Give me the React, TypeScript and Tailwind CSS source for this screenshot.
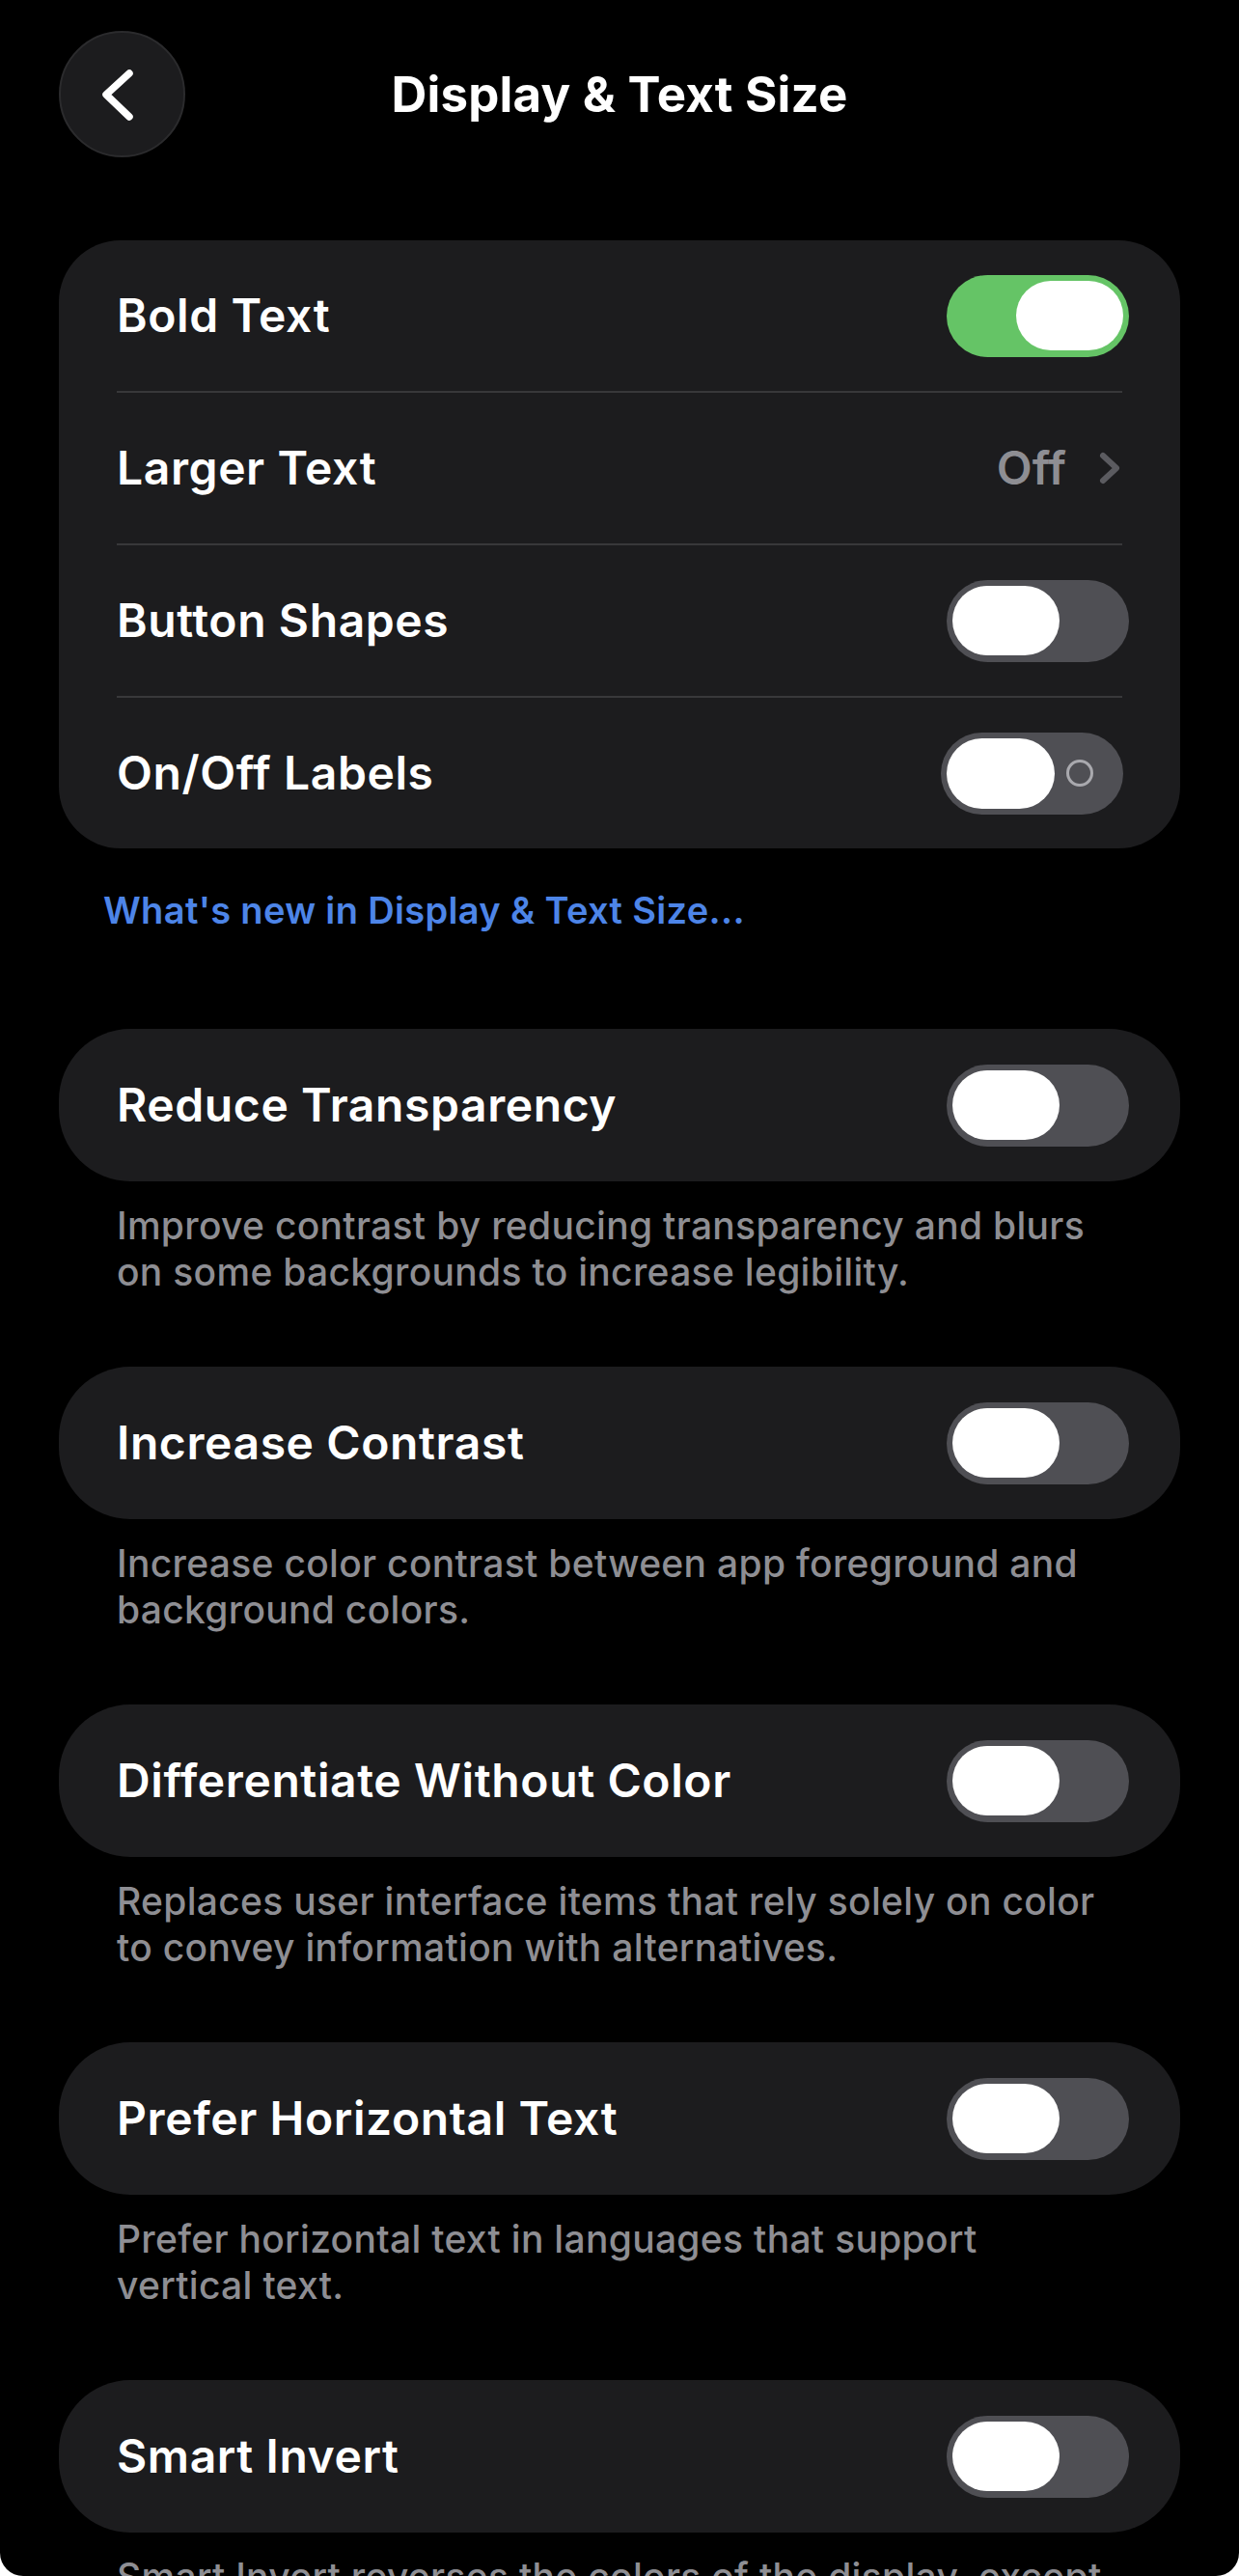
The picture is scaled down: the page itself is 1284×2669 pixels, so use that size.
import React from "react";

const FONT = "font-['Inter','Noto_Sans',sans-serif]";

function Toggle({ on = false, labels = false }: { on?: boolean; labels?: boolean }) {
  if (labels) {
    return (
      <div className="flex h-[85px] w-[189px] items-center rounded-full bg-[#4f4f54] px-[6px]">
        <div className="h-[73px] w-[112px] rounded-full bg-white" />
        <div className="ml-[12px] h-[28px] w-[28px] rounded-full border-[3px] border-[#a9a9ae]" />
      </div>
    );
  }
  return (
    <div
      className={
        on
          ? "flex h-[85px] w-[189px] items-center justify-end rounded-full bg-[#65c466] px-[6px]"
          : "flex h-[85px] w-[189px] items-center justify-start rounded-full bg-[#4f4f54] px-[6px]"
      }
    >
      <div className="h-[72px] w-[111px] rounded-full bg-white" />
    </div>
  );
}

function Separator() {
  return <div className="mx-[60px] h-[2px] bg-[#38383a]" />;
}

function Label({ children }: { children: React.ReactNode }) {
  return <span className="text-[48px] font-semibold leading-none text-white tracking-[0.6px]">{children}</span>;
}

function Section({ title, lines }: { title: string; lines: string[] }) {
  return (
    <div className="flex flex-col">
      <div className="flex h-[158px] items-center justify-between rounded-[74px] bg-[#1c1c1e] pl-[60px] pr-[53px]">
        <Label>{title}</Label>
        <Toggle />
      </div>
      <div className="mt-[22px] pl-[60px] text-[39px] font-medium leading-[48px] tracking-[0.3px] text-[#8e8e93]">
        {lines.map((l) => (
          <span key={l} className="block whitespace-nowrap">
            {l}
          </span>
        ))}
      </div>
    </div>
  );
}

export default function App() {
  return (
    <div className={`h-[2669px] w-[1284px] overflow-hidden bg-white ${FONT}`}>
      <div className="h-[2669px] w-[1284px] overflow-hidden rounded-b-[24px] bg-black px-[61px] pt-[32px]">
        {/* Header */}
        <div className="grid h-[131px] grid-cols-[131px_1fr_131px] items-center">
          <div className="h-[131px] w-[131px] rounded-full border-[2px] border-[#2b2b2d] bg-[#1c1c1e]">
            <svg width="127" height="127" viewBox="0 0 127 127" className="block">
              <polyline
                points="71,42 47,64 71,87"
                fill="none"
                stroke="#ffffff"
                strokeWidth="7.5"
                strokeLinecap="round"
                strokeLinejoin="round"
              />
            </svg>
          </div>
          <div className="text-center text-[51px] font-bold leading-none tracking-[0.2px] text-white">
            Display &amp; Text Size
          </div>
          <div />
        </div>

        {/* Main group */}
        <div className="mt-[86px] flex flex-col rounded-[64px] bg-[#1c1c1e]">
          <div className="flex h-[156px] items-center justify-between pl-[60px] pr-[53px]">
            <Label>Bold Text</Label>
            <Toggle on />
          </div>
          <Separator />
          <div className="flex h-[156px] items-center justify-between pl-[60px] pr-[61px]">
            <Label>Larger Text</Label>
            <div className="flex items-center">
              <span className="text-[48px] font-semibold leading-none text-[#8e8e93]">Off</span>
              <svg width="24" height="36" viewBox="0 0 24 36" className="ml-[33px] block">
                <polyline
                  points="5,5 19,18 5,31"
                  fill="none"
                  stroke="#5b5b60"
                  strokeWidth="6"
                  strokeLinecap="round"
                  strokeLinejoin="round"
                />
              </svg>
            </div>
          </div>
          <Separator />
          <div className="flex h-[156px] items-center justify-between pl-[60px] pr-[53px]">
            <Label>Button Shapes</Label>
            <Toggle />
          </div>
          <Separator />
          <div className="flex h-[156px] items-center justify-between pl-[60px] pr-[59px]">
            <Label>On/Off Labels</Label>
            <Toggle labels />
          </div>
        </div>

        <div className="mt-[40px] pl-[46px] text-[38px] font-semibold leading-[48px] tracking-[0.35px] text-[#4d85e8]">
          What's new in Display &amp; Text Size...
        </div>

        <div className="mt-[99px] flex flex-col gap-[74px]">
          <Section
            title="Reduce Transparency"
            lines={["Improve contrast by reducing transparency and blurs", "on some backgrounds to increase legibility."]}
          />
          <Section
            title="Increase Contrast"
            lines={["Increase color contrast between app foreground and", "background colors."]}
          />
          <Section
            title="Differentiate Without Color"
            lines={["Replaces user interface items that rely solely on color", "to convey information with alternatives."]}
          />
          <Section
            title="Prefer Horizontal Text"
            lines={["Prefer horizontal text in languages that support", "vertical text."]}
          />
          <Section
            title="Smart Invert"
            lines={[
              "Smart Invert reverses the colors of the display, except",
              "for images, media and some apps that use dark color styles.",
            ]}
          />
        </div>
      </div>
    </div>
  );
}
